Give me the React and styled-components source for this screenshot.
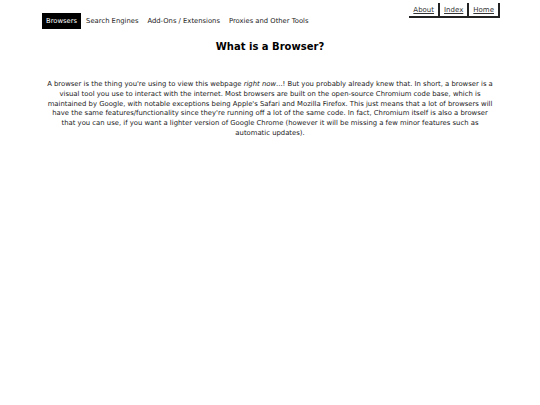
import React from 'react';
import styled, { createGlobalStyle } from 'styled-components';

const GlobalStyle = createGlobalStyle`
    body {
        margin: 0;
        background: #fff;
        font-family: "DejaVu Sans", Verdana, sans-serif;
        color: #000;
    }
`;

const tabs = ['Browsers', 'Search Engines', 'Add-Ons / Extensions', 'Proxies and Other Tools'];
const links = ['About', 'Index', 'Home'];

const App = () => {
    return (
        <Page>
            <GlobalStyle />
            <TopLinks>
                {links.map((link) => (
                    <TopLink key={link} href="#">{link}</TopLink>
                ))}
            </TopLinks>
            <Tabs>
                {tabs.map((tab, index) => (
                    <Tab key={tab} active={index === 0}>{tab}</Tab>
                ))}
            </Tabs>
            <Title>What is a Browser?</Title>
            <Text>
                A browser is the thing you're using to view this webpage <em>right now</em>...! But you probably already knew that. In short, a browser is a visual tool you use to interact with the internet. Most browsers are built on the open-source Chromium code base, which is maintained by Google, with notable exceptions being Apple's Safari and Mozilla Firefox. This just means that a lot of browsers will have the same features/functionality since they're running off a lot of the same code. In fact, Chromium itself is also a browser that you can use, if you want a lighter version of Google Chrome (however it will be missing a few minor features such as automatic updates).
            </Text>
        </Page>
    );
}

const Page = styled.div`
    padding: 0 42px;
    min-height: 405px;
`;

const TopLinks = styled.div`
    display: flex;
    justify-content: flex-end;
    padding-top: 3px;
    margin-right: -2px;
`;

const TopLink = styled.a`
    font-size: 7px;
    color: #333;
    padding: 3px 4px 2px 4px;
    border-right: 2px solid #222;
    border-bottom: 2px solid #222;
`;

const Tabs = styled.div`
    display: flex;
    align-items: center;
    margin-top: -5px;
`;

const Tab = styled.div`
    font-size: 6.8px;
    padding: 4px 4px;
    margin-right: 1px;
    background: ${(p) => (p.active ? '#000' : 'transparent')};
    color: ${(p) => (p.active ? '#fff' : '#222')};
`;

const Title = styled.h1`
    font-size: 10px;
    font-weight: bold;
    text-align: center;
    margin: 12px 0 0 0;
`;

const Text = styled.p`
    font-size: 6.85px;
    line-height: 9.8px;
    text-align: center;
    margin: 28px 4px 0 4px;
    color: #1a1a1a;
`;

export default App;
